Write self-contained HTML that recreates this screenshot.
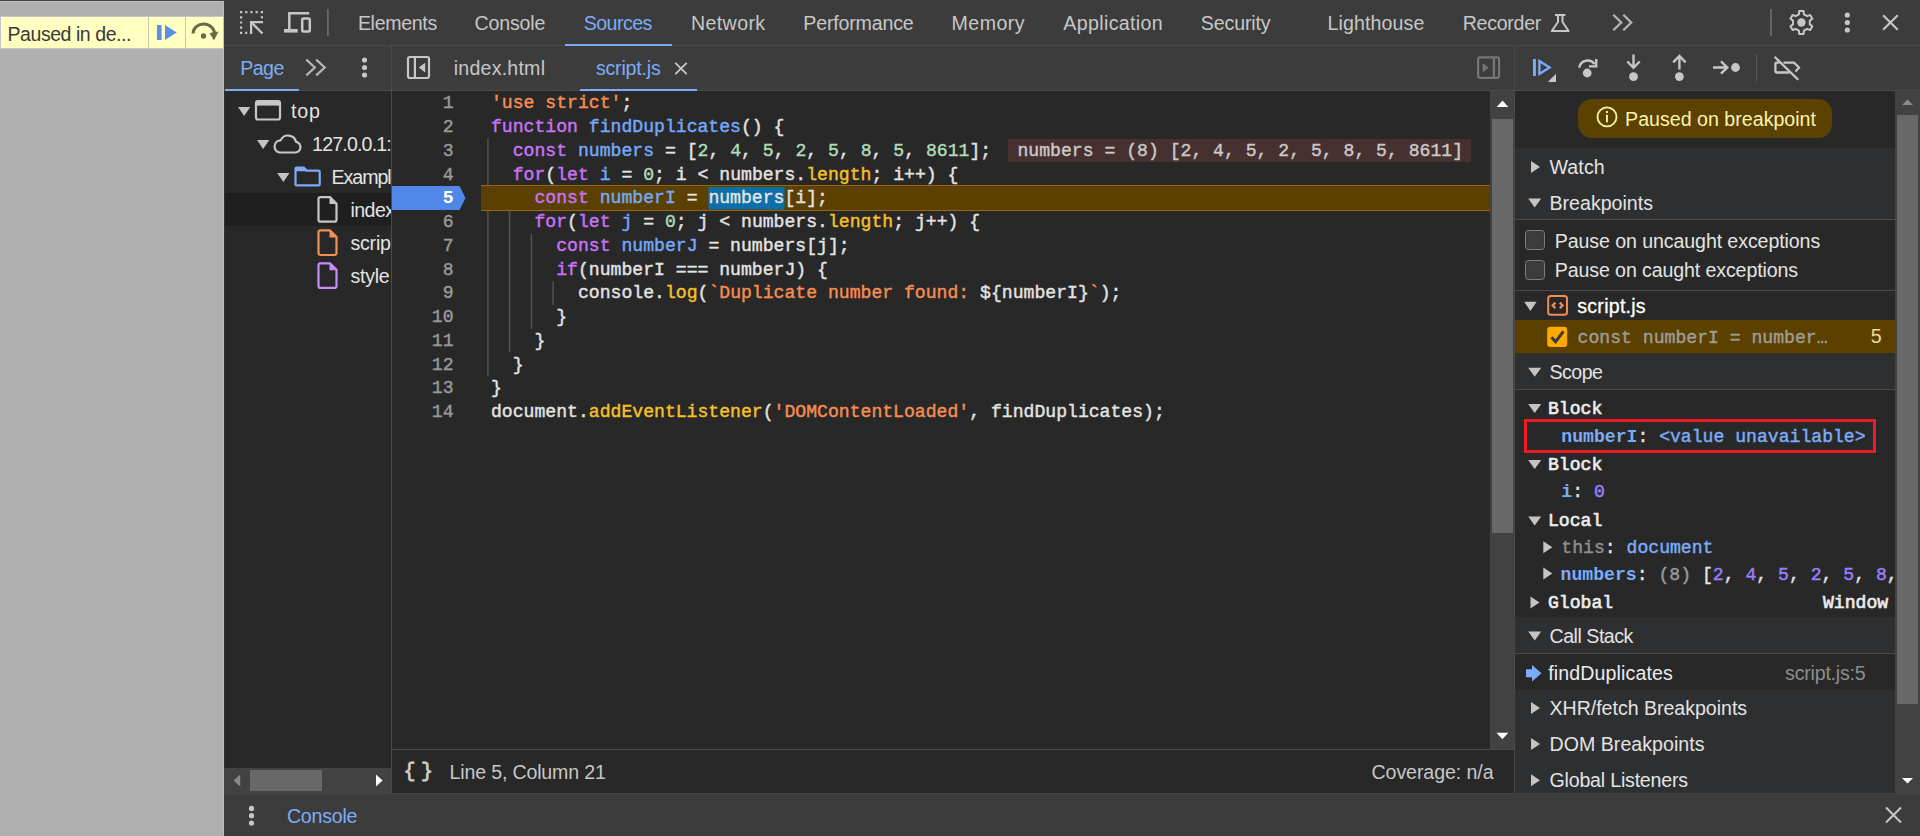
<!DOCTYPE html>
<html lang="en"><head><meta charset="utf-8"><title>DevTools - Sources - Paused on breakpoint</title>
<style>
html,body{margin:0;padding:0}
body{width:1920px;height:836px;overflow:hidden;position:relative;background:#282828;font-family:"Liberation Sans", sans-serif;}
.b{position:absolute;box-sizing:border-box}
.c{position:absolute;overflow:hidden}
.t{position:absolute;white-space:pre;line-height:1;}
.t b{font-weight:700;-webkit-text-stroke:0}
.u{font-family:"Liberation Sans", sans-serif}
.m{font-family:"Liberation Mono", monospace;-webkit-text-stroke:0.42px}
svg.ic{position:absolute;left:0;top:0;width:1920px;height:836px;pointer-events:none}
</style></head><body>
<div class="b" style="left:0px;top:0px;width:224px;height:836px;background:#b0b0b0;"></div>
<div class="b" style="left:0px;top:0px;width:224px;height:1px;background:#454545;"></div>
<div class="b" style="left:0px;top:1px;width:224px;height:1px;background:#bcbcbc;"></div>
<div class="b" style="left:223px;top:1px;width:1px;height:835px;background:#bcbcbc;"></div>
<div class="b" style="left:0px;top:16px;width:224px;height:33px;background:#ffffc2;border:1px solid #c4c4c4;"></div>
<div class="b" style="left:148px;top:17px;width:1px;height:31px;background:#c9c9a4;"></div>
<div class="b" style="left:185px;top:17px;width:1px;height:31px;background:#c9c9a4;"></div>
<div class="b" style="left:224px;top:0px;width:1696px;height:45px;background:#3c3c3c;"></div>
<div class="b" style="left:224px;top:45px;width:1696px;height:1px;background:#4a4a4a;"></div>
<div class="b" style="left:224px;top:46px;width:1696px;height:44px;background:#3c3c3c;"></div>
<div class="b" style="left:224px;top:90px;width:1696px;height:1px;background:#4a4a4a;"></div>
<div class="b" style="left:565px;top:44px;width:107px;height:2px;background:#7cacf8;"></div>
<div class="b" style="left:225px;top:89px;width:74px;height:2px;background:#7cacf8;"></div>
<div class="b" style="left:580px;top:89px;width:117px;height:2px;background:#7cacf8;"></div>
<div class="b" style="left:391px;top:46px;width:1px;height:747px;background:#4a4a4a;"></div>
<div class="b" style="left:1514px;top:46px;width:1px;height:747px;background:#4a4a4a;"></div>
<div class="b" style="left:224px;top:91px;width:167px;height:677px;background:#282828;"></div>
<div class="b" style="left:224px;top:91px;width:1px;height:677px;background:#313131;"></div>
<div class="b" style="left:225px;top:193px;width:166px;height:33px;background:#1f1f1f;"></div>
<div class="b" style="left:224px;top:768px;width:167px;height:25px;background:#424242;"></div>
<div class="b" style="left:250px;top:770px;width:72px;height:21px;background:#686868;"></div>
<div class="b" style="left:392px;top:91px;width:1098px;height:658px;background:#282828;"></div>
<div class="b" style="left:481px;top:185px;width:1009px;height:26px;background:#5b4000;border:1px solid #9a6500;border-right:none;border-left:none;"></div>
<div class="b" style="left:708.44px;top:187px;width:76.1px;height:22.5px;background:#0d6ea8;"></div>
<div class="b" style="left:1008px;top:139px;width:463px;height:23px;background:#463030;"></div>
<div class="b" style="left:1490px;top:91px;width:24px;height:658px;background:#424242;"></div>
<div class="b" style="left:1492px;top:119px;width:21px;height:414px;background:#686868;"></div>
<div class="b" style="left:392px;top:749px;width:1122px;height:1px;background:#4a4a4a;"></div>
<div class="b" style="left:392px;top:750px;width:1122px;height:43px;background:#282828;"></div>
<div class="b" style="left:1515px;top:91px;width:380px;height:702px;background:#282828;"></div>
<div class="b" style="left:1578px;top:99px;width:254px;height:39px;background:#5b4200;border-radius:14px;"></div>
<div class="b" style="left:1515px;top:148px;width:380px;height:36px;background:#2e2f31;"></div>
<div class="b" style="left:1515px;top:184px;width:380px;height:36px;background:#2e2f31;"></div>
<div class="b" style="left:1515px;top:219px;width:380px;height:1px;background:#4a4a4a;"></div>
<div class="b" style="left:1525px;top:230.2px;width:20px;height:19.6px;background:#3b3b3b;border:1.5px solid #7d7d7d;border-radius:3.5px;"></div>
<div class="b" style="left:1525px;top:260.2px;width:20px;height:19.6px;background:#3b3b3b;border:1.5px solid #7d7d7d;border-radius:3.5px;"></div>
<div class="b" style="left:1515px;top:290px;width:380px;height:1px;background:#4a4a4a;"></div>
<div class="b" style="left:1515px;top:320px;width:380px;height:33.3px;background:#5b4000;"></div>
<div class="b" style="left:1515px;top:353.3px;width:380px;height:36.0px;background:#2e2f31;"></div>
<div class="b" style="left:1515px;top:389px;width:380px;height:1px;background:#4a4a4a;"></div>
<div class="b" style="left:1524px;top:419px;width:352px;height:34px;background:transparent;border:3px solid #ed1c24;"></div>
<div class="b" style="left:1515px;top:617px;width:380px;height:36px;background:#2e2f31;"></div>
<div class="b" style="left:1515px;top:653px;width:380px;height:1px;background:#4a4a4a;"></div>
<div class="b" style="left:1515px;top:654px;width:380px;height:35.5px;background:#282828;"></div>
<div class="b" style="left:1515px;top:689.5px;width:380px;height:103.5px;background:#2e2f31;"></div>
<div class="b" style="left:1895px;top:91px;width:25px;height:702px;background:#424242;"></div>
<div class="b" style="left:1897px;top:114.5px;width:21px;height:589.0px;background:#686868;"></div>
<div class="b" style="left:224px;top:793px;width:1696px;height:43px;background:#3c3c3c;"></div>
<div class="b" style="left:224px;top:793px;width:1696px;height:1px;background:#444444;"></div>
<svg class="ic" viewBox="0 0 1920 836">
<rect x="487.15" y="138.54" width="1.5" height="237.70" fill="#525252"/>
<rect x="508.85" y="209.85" width="1.5" height="142.62" fill="#525252"/>
<rect x="530.65" y="233.62" width="1.5" height="95.08" fill="#525252"/>
<rect x="552.35" y="281.16" width="1.5" height="23.77" fill="#525252"/>
<rect x="481" y="185" width="1009" height="26" fill="#5b4000"/><rect x="481" y="185" width="1009" height="1" fill="#9a6500"/><rect x="481" y="210" width="1009" height="1" fill="#9a6500"/>
<rect x="708.44" y="187" width="76.10" height="22.5" fill="#0d6ea8"/>
<path d="M392 186 H459.5 L465.5 198 L459.5 210 H392 Z" fill="#4f86e8"/>
</svg>
<span class="t u" id="t0" style="left:7.50px;top:24.60px;font-size:19.5px;color:#3a3a3a;letter-spacing:-0.440px;">Paused in de...</span>
<span class="t u" id="t1" style="left:357.90px;top:13.70px;font-size:19.6px;color:#c7c7c7;letter-spacing:-0.336px;">Elements</span>
<span class="t u" id="t2" style="left:474.40px;top:13.70px;font-size:19.6px;color:#c7c7c7;letter-spacing:-0.142px;">Console</span>
<span class="t u" id="t3" style="left:583.70px;top:13.70px;font-size:19.6px;color:#7cacf8;letter-spacing:-0.527px;">Sources</span>
<span class="t u" id="t4" style="left:691.00px;top:13.70px;font-size:19.6px;color:#c7c7c7;letter-spacing:0.375px;">Network</span>
<span class="t u" id="t5" style="left:803.30px;top:13.70px;font-size:19.6px;color:#c7c7c7;letter-spacing:-0.179px;">Performance</span>
<span class="t u" id="t6" style="left:951.50px;top:13.70px;font-size:19.6px;color:#c7c7c7;letter-spacing:0.472px;">Memory</span>
<span class="t u" id="t7" style="left:1063.30px;top:13.70px;font-size:19.6px;color:#c7c7c7;letter-spacing:0.358px;">Application</span>
<span class="t u" id="t8" style="left:1200.80px;top:13.70px;font-size:19.6px;color:#c7c7c7;letter-spacing:-0.135px;">Security</span>
<span class="t u" id="t9" style="left:1327.50px;top:13.70px;font-size:19.6px;color:#c7c7c7;letter-spacing:0.113px;">Lighthouse</span>
<span class="t u" id="t10" style="left:1462.70px;top:13.70px;font-size:19.6px;color:#c7c7c7;letter-spacing:-0.274px;">Recorder</span>
<span class="t u" id="t11" style="left:240.30px;top:59.20px;font-size:19.6px;color:#7cacf8;letter-spacing:-0.591px;">Page</span>
<span class="t u" id="t12" style="left:453.80px;top:59.20px;font-size:19.6px;color:#c7c7c7;letter-spacing:0.209px;">index.html</span>
<span class="t u" id="t13" style="left:595.90px;top:59.20px;font-size:19.6px;color:#7cacf8;letter-spacing:-0.202px;">script.js</span>
<div class="c" style="left:225px;top:91px;width:166px;height:677px"><span class="t u" id="t14" style="left:66.10px;top:10.50px;font-size:19.6px;color:#e3e3e3;letter-spacing:0.817px;">top</span></div>
<div class="c" style="left:225px;top:91px;width:166px;height:677px"><span class="t u" id="t15" style="left:87.10px;top:43.60px;font-size:19.6px;color:#e3e3e3;letter-spacing:-0.827px;">127.0.0.1:5500</span></div>
<div class="c" style="left:225px;top:91px;width:166px;height:677px"><span class="t u" id="t16" style="left:106.50px;top:76.80px;font-size:19.6px;color:#e3e3e3;letter-spacing:-1.041px;">Examples</span></div>
<div class="c" style="left:225px;top:91px;width:166px;height:677px"><span class="t u" id="t17" style="left:125.50px;top:109.80px;font-size:19.6px;color:#e3e3e3;letter-spacing:-0.569px;">index.html</span></div>
<div class="c" style="left:225px;top:91px;width:166px;height:677px"><span class="t u" id="t18" style="left:125.50px;top:142.80px;font-size:19.6px;color:#e3e3e3;letter-spacing:-0.235px;">script.js</span></div>
<div class="c" style="left:225px;top:91px;width:166px;height:677px"><span class="t u" id="t19" style="left:125.50px;top:175.80px;font-size:19.6px;color:#e3e3e3;letter-spacing:-0.279px;">style.css</span></div>
<span class="t m" id="t20" style="left:442.73px;top:94.20px;font-size:18.12px;color:#9a9a9a;">1</span>
<span class="t m" id="t21" style="left:491.00px;top:94.20px;font-size:18.12px;color:#e3e3e3;"><span style="color:#f68d52">&#x27;use strict&#x27;</span><span style="color:#e3e3e3">;</span></span>
<span class="t m" id="t22" style="left:442.73px;top:117.97px;font-size:18.12px;color:#9a9a9a;">2</span>
<span class="t m" id="t23" style="left:491.00px;top:117.97px;font-size:18.12px;color:#e3e3e3;"><span style="color:#c873f6">function</span> <span style="color:#74a9f9">findDuplicates</span><span style="color:#e3e3e3">() {</span></span>
<span class="t m" id="t24" style="left:442.73px;top:141.74px;font-size:18.12px;color:#9a9a9a;">3</span>
<span class="t m" id="t25" style="left:491.00px;top:141.74px;font-size:18.12px;color:#e3e3e3;">  <span style="color:#c873f6">const</span> <span style="color:#74a9f9">numbers</span><span style="color:#e3e3e3"> = [</span><span style="color:#b0dcb8">2</span><span style="color:#e3e3e3">, </span><span style="color:#b0dcb8">4</span><span style="color:#e3e3e3">, </span><span style="color:#b0dcb8">5</span><span style="color:#e3e3e3">, </span><span style="color:#b0dcb8">2</span><span style="color:#e3e3e3">, </span><span style="color:#b0dcb8">5</span><span style="color:#e3e3e3">, </span><span style="color:#b0dcb8">8</span><span style="color:#e3e3e3">, </span><span style="color:#b0dcb8">5</span><span style="color:#e3e3e3">, </span><span style="color:#b0dcb8">8611</span><span style="color:#e3e3e3">];</span></span>
<span class="t m" id="t26" style="left:442.73px;top:165.51px;font-size:18.12px;color:#9a9a9a;">4</span>
<span class="t m" id="t27" style="left:491.00px;top:165.51px;font-size:18.12px;color:#e3e3e3;">  <span style="color:#c873f6">for</span><span style="color:#e3e3e3">(</span><span style="color:#c873f6">let</span> <span style="color:#74a9f9">i</span><span style="color:#e3e3e3"> = </span><span style="color:#b0dcb8">0</span><span style="color:#e3e3e3">; i &lt; numbers.</span><span style="color:#f5c02a">length</span><span style="color:#e3e3e3">; i++) {</span></span>
<span class="t m" id="t28" style="left:442.73px;top:189.28px;font-size:18.12px;color:#ffffff;font-weight:700;-webkit-text-stroke:0;">5</span>
<span class="t m" id="t29" style="left:491.00px;top:189.28px;font-size:18.12px;color:#e3e3e3;">    <span style="color:#c873f6">const</span> <span style="color:#74a9f9">numberI</span><span style="color:#e3e3e3"> = numbers[i];</span></span>
<span class="t m" id="t30" style="left:442.73px;top:213.05px;font-size:18.12px;color:#9a9a9a;">6</span>
<span class="t m" id="t31" style="left:491.00px;top:213.05px;font-size:18.12px;color:#e3e3e3;">    <span style="color:#c873f6">for</span><span style="color:#e3e3e3">(</span><span style="color:#c873f6">let</span> <span style="color:#74a9f9">j</span><span style="color:#e3e3e3"> = </span><span style="color:#b0dcb8">0</span><span style="color:#e3e3e3">; j &lt; numbers.</span><span style="color:#f5c02a">length</span><span style="color:#e3e3e3">; j++) {</span></span>
<span class="t m" id="t32" style="left:442.73px;top:236.82px;font-size:18.12px;color:#9a9a9a;">7</span>
<span class="t m" id="t33" style="left:491.00px;top:236.82px;font-size:18.12px;color:#e3e3e3;">      <span style="color:#c873f6">const</span> <span style="color:#74a9f9">numberJ</span><span style="color:#e3e3e3"> = numbers[j];</span></span>
<span class="t m" id="t34" style="left:442.73px;top:260.59px;font-size:18.12px;color:#9a9a9a;">8</span>
<span class="t m" id="t35" style="left:491.00px;top:260.59px;font-size:18.12px;color:#e3e3e3;">      <span style="color:#c873f6">if</span><span style="color:#e3e3e3">(numberI === numberJ) {</span></span>
<span class="t m" id="t36" style="left:442.73px;top:284.36px;font-size:18.12px;color:#9a9a9a;">9</span>
<span class="t m" id="t37" style="left:491.00px;top:284.36px;font-size:18.12px;color:#e3e3e3;">        <span style="color:#e3e3e3">console.</span><span style="color:#f5c02a">log</span><span style="color:#e3e3e3">(</span><span style="color:#f68d52">`Duplicate number found: </span><span style="color:#e3e3e3">${numberI}</span><span style="color:#f68d52">`</span><span style="color:#e3e3e3">);</span></span>
<span class="t m" id="t38" style="left:431.86px;top:308.13px;font-size:18.12px;color:#9a9a9a;">10</span>
<span class="t m" id="t39" style="left:491.00px;top:308.13px;font-size:18.12px;color:#e3e3e3;">      <span style="color:#e3e3e3">}</span></span>
<span class="t m" id="t40" style="left:431.86px;top:331.90px;font-size:18.12px;color:#9a9a9a;">11</span>
<span class="t m" id="t41" style="left:491.00px;top:331.90px;font-size:18.12px;color:#e3e3e3;">    <span style="color:#e3e3e3">}</span></span>
<span class="t m" id="t42" style="left:431.86px;top:355.67px;font-size:18.12px;color:#9a9a9a;">12</span>
<span class="t m" id="t43" style="left:491.00px;top:355.67px;font-size:18.12px;color:#e3e3e3;">  <span style="color:#e3e3e3">}</span></span>
<span class="t m" id="t44" style="left:431.86px;top:379.44px;font-size:18.12px;color:#9a9a9a;">13</span>
<span class="t m" id="t45" style="left:491.00px;top:379.44px;font-size:18.12px;color:#e3e3e3;"><span style="color:#e3e3e3">}</span></span>
<span class="t m" id="t46" style="left:431.86px;top:403.21px;font-size:18.12px;color:#9a9a9a;">14</span>
<span class="t m" id="t47" style="left:491.00px;top:403.21px;font-size:18.12px;color:#e3e3e3;"><span style="color:#e3e3e3">document.</span><span style="color:#f5c02a">addEventListener</span><span style="color:#e3e3e3">(</span><span style="color:#f68d52">&#x27;DOMContentLoaded&#x27;</span><span style="color:#e3e3e3">, findDuplicates);</span></span>
<span class="t m" id="t48" style="left:1017.50px;top:141.74px;font-size:18.12px;color:#c9c9c9;">numbers = (8) [2, 4, 5, 2, 5, 8, 5, 8611]</span>
<span class="t m" id="t49" style="left:403.40px;top:762.00px;font-size:20px;color:#cdcdcd;letter-spacing:0.861px;word-spacing:-8px;-webkit-text-stroke:0.8px;">{ }</span>
<span class="t u" id="t50" style="left:449.50px;top:763.20px;font-size:19.6px;color:#c7c7c7;letter-spacing:-0.167px;">Line 5, Column 21</span>
<span class="t u" id="t51" style="left:1371.50px;top:763.20px;font-size:19.6px;color:#c7c7c7;letter-spacing:-0.084px;">Coverage: n/a</span>
<span class="t u" id="t52" style="left:1625.10px;top:109.60px;font-size:19.6px;color:#fdf3aa;letter-spacing:0.013px;">Paused on breakpoint</span>
<span class="t u" id="t53" style="left:1549.50px;top:157.60px;font-size:19.6px;color:#e3e3e3;letter-spacing:0.097px;">Watch</span>
<span class="t u" id="t54" style="left:1549.50px;top:193.60px;font-size:19.6px;color:#e3e3e3;letter-spacing:0.001px;">Breakpoints</span>
<span class="t u" id="t55" style="left:1554.80px;top:231.80px;font-size:19.6px;color:#e3e3e3;letter-spacing:-0.096px;">Pause on uncaught exceptions</span>
<span class="t u" id="t56" style="left:1554.80px;top:261.00px;font-size:19.6px;color:#e3e3e3;letter-spacing:-0.115px;">Pause on caught exceptions</span>
<span class="t u" id="t57" style="left:1577.30px;top:297.30px;font-size:19.6px;color:#ffffff;letter-spacing:0.242px;-webkit-text-stroke:0.3px #ffffff;">script.js</span>
<span class="t m" id="t58" style="left:1577.60px;top:328.50px;font-size:18.12px;color:#9d9d96;">const numberI = number…</span>
<span class="t u" id="t59" style="left:1870.80px;top:326.60px;font-size:19.6px;color:#f3dc97;letter-spacing:0.094px;">5</span>
<span class="t u" id="t60" style="left:1549.50px;top:362.90px;font-size:19.6px;color:#e3e3e3;letter-spacing:-0.512px;">Scope</span>
<span class="t m" id="t61" style="left:1548.00px;top:399.80px;font-size:18.12px;color:#ececec;-webkit-text-stroke:0.65px;">Block</span>
<span class="t m" id="t62" style="left:1561.30px;top:427.60px;font-size:18.12px;color:#e3e3e3;"><b style="color:#7cacf8">numberI</b>: <span style="color:#7cacf8">&lt;value unavailable&gt;</span></span>
<span class="t m" id="t63" style="left:1548.00px;top:455.70px;font-size:18.12px;color:#ececec;-webkit-text-stroke:0.65px;">Block</span>
<span class="t m" id="t64" style="left:1561.30px;top:483.20px;font-size:18.12px;color:#e3e3e3;"><b style="color:#7cacf8">i</b>: <span style="color:#9980ff">0</span></span>
<span class="t m" id="t65" style="left:1548.00px;top:512.30px;font-size:18.12px;color:#ececec;-webkit-text-stroke:0.65px;">Local</span>
<span class="t m" id="t66" style="left:1561.30px;top:539.20px;font-size:18.12px;color:#e3e3e3;"><span style="color:#8f8f8f">this</span>: <span style="color:#7cacf8">document</span></span>
<div class="c" style="left:1515px;top:391px;width:380px;height:226px"><span class="t m" id="t67" style="left:45.60px;top:174.50px;font-size:18.12px;color:#e3e3e3;"><b style="color:#7cacf8">numbers</b>: <span style="color:#9a9a9a">(8)</span> [<span style="color:#9980ff">2</span>, <span style="color:#9980ff">4</span>, <span style="color:#9980ff">5</span>, <span style="color:#9980ff">2</span>, <span style="color:#9980ff">5</span>, <span style="color:#9980ff">8</span>, <span style="color:#9980ff">5</span>, <span style="color:#9980ff">8611</span>]</span></div>
<span class="t m" id="t68" style="left:1548.00px;top:594.40px;font-size:18.12px;color:#ececec;-webkit-text-stroke:0.65px;">Global</span>
<span class="t m" id="t69" style="left:1823.00px;top:594.40px;font-size:18.12px;color:#ececec;-webkit-text-stroke:0.65px;">Window</span>
<span class="t u" id="t70" style="left:1549.50px;top:626.60px;font-size:19.6px;color:#e3e3e3;letter-spacing:-0.480px;">Call Stack</span>
<span class="t u" id="t71" style="left:1548.30px;top:664.00px;font-size:19.6px;color:#ececec;letter-spacing:0.109px;">findDuplicates</span>
<span class="t u" id="t72" style="left:1785.10px;top:664.00px;font-size:19.6px;color:#8d8d8d;letter-spacing:-0.214px;">script.js:5</span>
<span class="t u" id="t73" style="left:1549.50px;top:698.50px;font-size:19.6px;color:#e3e3e3;letter-spacing:-0.029px;">XHR/fetch Breakpoints</span>
<span class="t u" id="t74" style="left:1549.50px;top:734.50px;font-size:19.6px;color:#e3e3e3;letter-spacing:0.024px;">DOM Breakpoints</span>
<span class="t u" id="t75" style="left:1549.50px;top:770.60px;font-size:19.6px;color:#e3e3e3;letter-spacing:-0.200px;">Global Listeners</span>
<span class="t u" id="t76" style="left:286.90px;top:806.80px;font-size:19.6px;color:#7cacf8;letter-spacing:-0.213px;">Console</span>
<svg class="ic" viewBox="0 0 1920 836">
<path d="M1496.7 107 L1502.5 100.6 L1508.3 107 Z" fill="#ffffff"/>
<path d="M1496.5 732.8 L1502.4 739.2 L1508.3 732.8 Z" fill="#ffffff"/>
<path d="M1531 161 V173 L1540 167 Z" fill="#c4c4c4"/>
<path d="M1528.2 198.5 H1541.2 L1534.7 207.5 Z" fill="#c4c4c4"/>
<path d="M1528.2 367.8 H1541.2 L1534.7 376.8 Z" fill="#c4c4c4"/>
<path d="M1528.2 404.0 H1541.2 L1534.7 413.0 Z" fill="#c4c4c4"/>
<path d="M1528.2 460.1 H1541.2 L1534.7 469.1 Z" fill="#c4c4c4"/>
<path d="M1528.2 516.6 H1541.2 L1534.7 525.6 Z" fill="#c4c4c4"/>
<path d="M1530.5 596.5 V608.5 L1539.5 602.5 Z" fill="#c4c4c4"/>
<path d="M1543.3 541.2 V553.2 L1552.3 547.2 Z" fill="#c4c4c4"/>
<path d="M1543.3 567.6 V579.6 L1552.3 573.6 Z" fill="#c4c4c4"/>
<path d="M1528.2 631.5 H1541.2 L1534.7 640.5 Z" fill="#c4c4c4"/>
<path d="M1531 702.1 V714.1 L1540 708.1 Z" fill="#c4c4c4"/>
<path d="M1531 738.1 V750.1 L1540 744.1 Z" fill="#c4c4c4"/>
<path d="M1531 774.2 V786.2 L1540 780.2 Z" fill="#c4c4c4"/>
<path d="M1902 105 L1907.5 99.5 L1913 105 Z" fill="#8a8a8a"/>
<path d="M1902 778 L1907.5 783.5 L1913 778 Z" fill="#ffffff"/>
<path d="M157 25 H161.6 V40 H157 Z M165 25 L176.8 32.5 L165 40 Z" fill="#5b8fe8" />
<path d="M193 33.5 A10.5 9.5 0 0 1 214.5 34" fill="none" stroke="#6a6a48" stroke-width="3" />
<path d="M209.5 33 L218.5 31.5 L214 40.5 Z" fill="#6a6a48" />
<circle cx="203.5" cy="36" r="2.7" fill="#6a6a48"/>
<rect x="241.1" y="12.1" width="20.8" height="20.8" fill="none" stroke="#c7c7c7" stroke-width="2.2" stroke-dasharray="2.2 3" stroke-dashoffset="1.1"/>
<rect x="247.5" y="18.5" width="17" height="17" fill="#3c3c3c"/>
<path d="M263 22.1 H251.1 V34" fill="none" stroke="#c7c7c7" stroke-width="2.3" />
<path d="M251.5 22.5 L262.5 33.5" fill="none" stroke="#c7c7c7" stroke-width="2.3" />
<path d="M309.2 13.2 H289.3 V30" fill="none" stroke="#c7c7c7" stroke-width="2.5" />
<path d="M284 29 H297.6 V32.6 H284 Z" fill="#c7c7c7" />
<rect x="302.2" y="18.6" width="7.6" height="13" rx="1.2" fill="none" stroke="#c7c7c7" stroke-width="2.5"/>
<path d="M327 9 H328.8 V36 H327 Z" fill="#696969" />
<path d="M1770 9 H1771.8 V36 H1770 Z" fill="#696969" />
<path d="M1555 15 H1565.4 M1558 16 V22 L1551.8 31 H1568.6 L1562.5 22 V16" fill="none" stroke="#c7c7c7" stroke-width="2" stroke-linejoin="round"/>
<path d="M1613.3 14.8 L1621.2 22.5 L1613.3 30.2 M1623.3 14.8 L1631.2 22.5 L1623.3 30.2" fill="none" stroke="#b4b4b4" stroke-width="2.3" />
<path d="M1798.86 14.28 L1799.21 11.11 L1803.59 11.11 L1803.94 14.28 L1807.24 16.19 L1810.17 14.91 L1812.36 18.70 L1809.79 20.59 L1809.79 24.41 L1812.36 26.30 L1810.17 30.09 L1807.24 28.81 L1803.94 30.72 L1803.59 33.89 L1799.21 33.89 L1798.86 30.72 L1795.56 28.81 L1792.63 30.09 L1790.44 26.30 L1793.01 24.41 L1793.01 20.59 L1790.44 18.70 L1792.63 14.91 L1795.56 16.19 Z" fill="none" stroke="#c7c7c7" stroke-width="2" stroke-linejoin="round"/>
<circle cx="1801.4" cy="22.5" r="4.2" fill="#c7c7c7"/>
<circle cx="1847.3" cy="15" r="2.6" fill="#c7c7c7"/>
<circle cx="1847.3" cy="22.5" r="2.6" fill="#c7c7c7"/>
<circle cx="1847.3" cy="30" r="2.6" fill="#c7c7c7"/>
<circle cx="364.5" cy="60" r="2.6" fill="#c7c7c7"/>
<circle cx="364.5" cy="67.5" r="2.6" fill="#c7c7c7"/>
<circle cx="364.5" cy="75" r="2.6" fill="#c7c7c7"/>
<circle cx="251.5" cy="808.4" r="2.6" fill="#c7c7c7"/>
<circle cx="251.5" cy="815.7" r="2.6" fill="#c7c7c7"/>
<circle cx="251.5" cy="823" r="2.6" fill="#c7c7c7"/>
<path d="M1883.1 15.2 L1897.7 29.8 M1897.7 15.2 L1883.1 29.8" fill="none" stroke="#c7c7c7" stroke-width="2.1" />
<path d="M1886 807.5 L1901 822.5 M1901 807.5 L1886 822.5" fill="none" stroke="#c7c7c7" stroke-width="2.1" />
<path d="M306.3 59.6 L314.8 67.5 L306.3 75.4 M316.2 59.6 L324.7 67.5 L316.2 75.4" fill="none" stroke="#b4b4b4" stroke-width="2.3" />
<rect x="408" y="57" width="21" height="21" rx="2" fill="none" stroke="#c7c7c7" stroke-width="2.2"/>
<path d="M414.9 57 V78" fill="none" stroke="#c7c7c7" stroke-width="2.2" />
<path d="M418.8 67.6 L425.2 62.7 V72.5 Z" fill="#c7c7c7" />
<path d="M675.3 62.8 L686.7 74.2 M686.7 62.8 L675.3 74.2" fill="none" stroke="#c7c7c7" stroke-width="1.9" />
<rect x="1478.1" y="57.4" width="21" height="20.4" rx="2" fill="none" stroke="#757575" stroke-width="2.2"/>
<path d="M1493.9 57.4 V77.8" fill="none" stroke="#757575" stroke-width="2.4" />
<path d="M1482.6 63 L1488.6 67.7 L1482.6 72.4 Z" fill="#757575" />
<path d="M1533 59 H1535.9 V76 H1533 Z" fill="#7cacf8" />
<path d="M1539.4 61 L1549.6 67.5 L1539.4 74 Z" fill="none" stroke="#7cacf8" stroke-width="2.3" stroke-linejoin="miter"/>
<path d="M1556 73.8 V82 H1547.8 Z" fill="#c7c7c7" />
<path d="M1579.2 67.6 A8.6 8.6 0 0 1 1594.6 64" fill="none" stroke="#c7c7c7" stroke-width="2.4" />
<path d="M1596.2 59 V66.4 H1589" fill="none" stroke="#c7c7c7" stroke-width="2.4" />
<circle cx="1587.2" cy="73" r="4.4" fill="#c7c7c7"/>
<path d="M1633.5 54.5 V68 M1627.3 61.5 L1633.5 67.8 L1639.7 61.5" fill="none" stroke="#c7c7c7" stroke-width="2.4" />
<circle cx="1633.5" cy="76.6" r="4.4" fill="#c7c7c7"/>
<path d="M1679.4 69.5 V56 M1673.2 62.3 L1679.4 56 L1685.6 62.3" fill="none" stroke="#c7c7c7" stroke-width="2.4" />
<circle cx="1679.4" cy="76.6" r="4.4" fill="#c7c7c7"/>
<path d="M1713 67.5 H1727 M1721 61.3 L1727.3 67.5 L1721 73.7" fill="none" stroke="#c7c7c7" stroke-width="2.4" />
<circle cx="1735.5" cy="67.5" r="4.4" fill="#c7c7c7"/>
<path d="M1756 54 H1757 V81 H1756 Z" fill="#5a5a5a" />
<path d="M1779.5 62.6 H1776.6 Q1775.4 62.6 1775.4 63.8 V71.3 Q1775.4 72.5 1776.6 72.5 H1789.5 M1783.5 62.6 H1794 L1799 67.5 L1795.5 71.5" fill="none" stroke="#c7c7c7" stroke-width="2.3" />
<path d="M1774.6 56.8 L1798.2 79.8" fill="none" stroke="#c7c7c7" stroke-width="2.3" />
<path d="M238 107.0 H250.3 L244.15 116.0 Z" fill="#c4c4c4" />
<path d="M257 140.0 H269.3 L263.15 149.0 Z" fill="#c4c4c4" />
<path d="M277.2 173.0 H289.5 L283.34999999999997 182.0 Z" fill="#c4c4c4" />
<rect x="256" y="101.1" width="24" height="18.4" rx="2" fill="none" stroke="#c7c7c7" stroke-width="2.2"/>
<path d="M256 101 H280 V105.6 H256 Z" fill="#c7c7c7" />
<path d="M279.6 152.5 H295.4 A5.4 5.4 0 0 0 296 141.8 A8.15 8.15 0 0 0 280.6 140.4 A6.1 6.1 0 0 0 279.6 152.5 Z" fill="none" stroke="#c7c7c7" stroke-width="2.2" stroke-linejoin="round"/>
<path d="M295.5 169 Q295.5 167.6 296.9 167.6 H303.8 L306.6 170.6 H318.3 Q319.7 170.6 319.7 172 V184 Q319.7 185.4 318.3 185.4 H296.9 Q295.5 185.4 295.5 184 Z" fill="none" stroke="#7cacf8" stroke-width="2.2" />
<path d="M295.5 168 H304 L306.8 171.2 H295.5 Z" fill="#7cacf8" />
<path d="M320.5 197.1 H330.0 L336.5 203.6 V219.7 Q336.5 221.7 334.5 221.7 H320.5 Q318.5 221.7 318.5 219.7 V199.1 Q318.5 197.1 320.5 197.1 Z" fill="none" stroke="#c7c7c7" stroke-width="2.2" />
<path d="M329.5 197.1 L336.5 204.1 H329.5 Z" fill="#c7c7c7" />
<path d="M320.5 230.4 H330.0 L336.5 236.9 V253.0 Q336.5 255.0 334.5 255.0 H320.5 Q318.5 255.0 318.5 253.0 V232.4 Q318.5 230.4 320.5 230.4 Z" fill="none" stroke="#f29054" stroke-width="2.2" />
<path d="M329.5 230.4 L336.5 237.4 H329.5 Z" fill="#f29054" />
<path d="M320.5 263.3 H330.0 L336.5 269.8 V285.90000000000003 Q336.5 287.90000000000003 334.5 287.90000000000003 H320.5 Q318.5 287.90000000000003 318.5 285.90000000000003 V265.3 Q318.5 263.3 320.5 263.3 Z" fill="none" stroke="#c98bf9" stroke-width="2.2" />
<path d="M329.5 263.3 L336.5 270.3 H329.5 Z" fill="#c98bf9" />
<path d="M233.5 780.5 L240.2 774.6 V786.4 Z" fill="#8a8a8a" />
<path d="M382.6 780.5 L376 774.4 V786.6 Z" fill="#ffffff" />
<circle cx="1607" cy="116.9" r="9.5" fill="none" stroke="#fdf3aa" stroke-width="1.8"/>
<path d="M1606 114.8 H1607.9 V122.2 H1606 Z M1606 111 H1607.9 V113.1 H1606 Z" fill="#fdf3aa" />
<path d="M1524.2 301.8 H1536.6 L1530.4 311 Z" fill="#c4c4c4" />
<rect x="1548.2" y="296" width="18.8" height="18.8" rx="2.5" fill="none" stroke="#f28b54" stroke-width="2"/>
<path d="M1555.4 302.6 L1552.6 305.4 L1555.4 308.2 M1559.8 302.6 L1562.6 305.4 L1559.8 308.2" fill="none" stroke="#f28b54" stroke-width="2.2" />
<rect x="1547.2" y="326.8" width="20" height="20.2" rx="3.2" fill="#ffa800"/>
<path d="M1551.4 337.2 L1555.6 341.6 L1563.4 331.4" fill="none" stroke="#3a3a3a" stroke-width="3" />
<path d="M1526 669.3 H1532 V665 L1541.5 673.3 L1532 681.6 V677.3 H1526 Z" fill="#7cacf8" />
</svg>
</body></html>
